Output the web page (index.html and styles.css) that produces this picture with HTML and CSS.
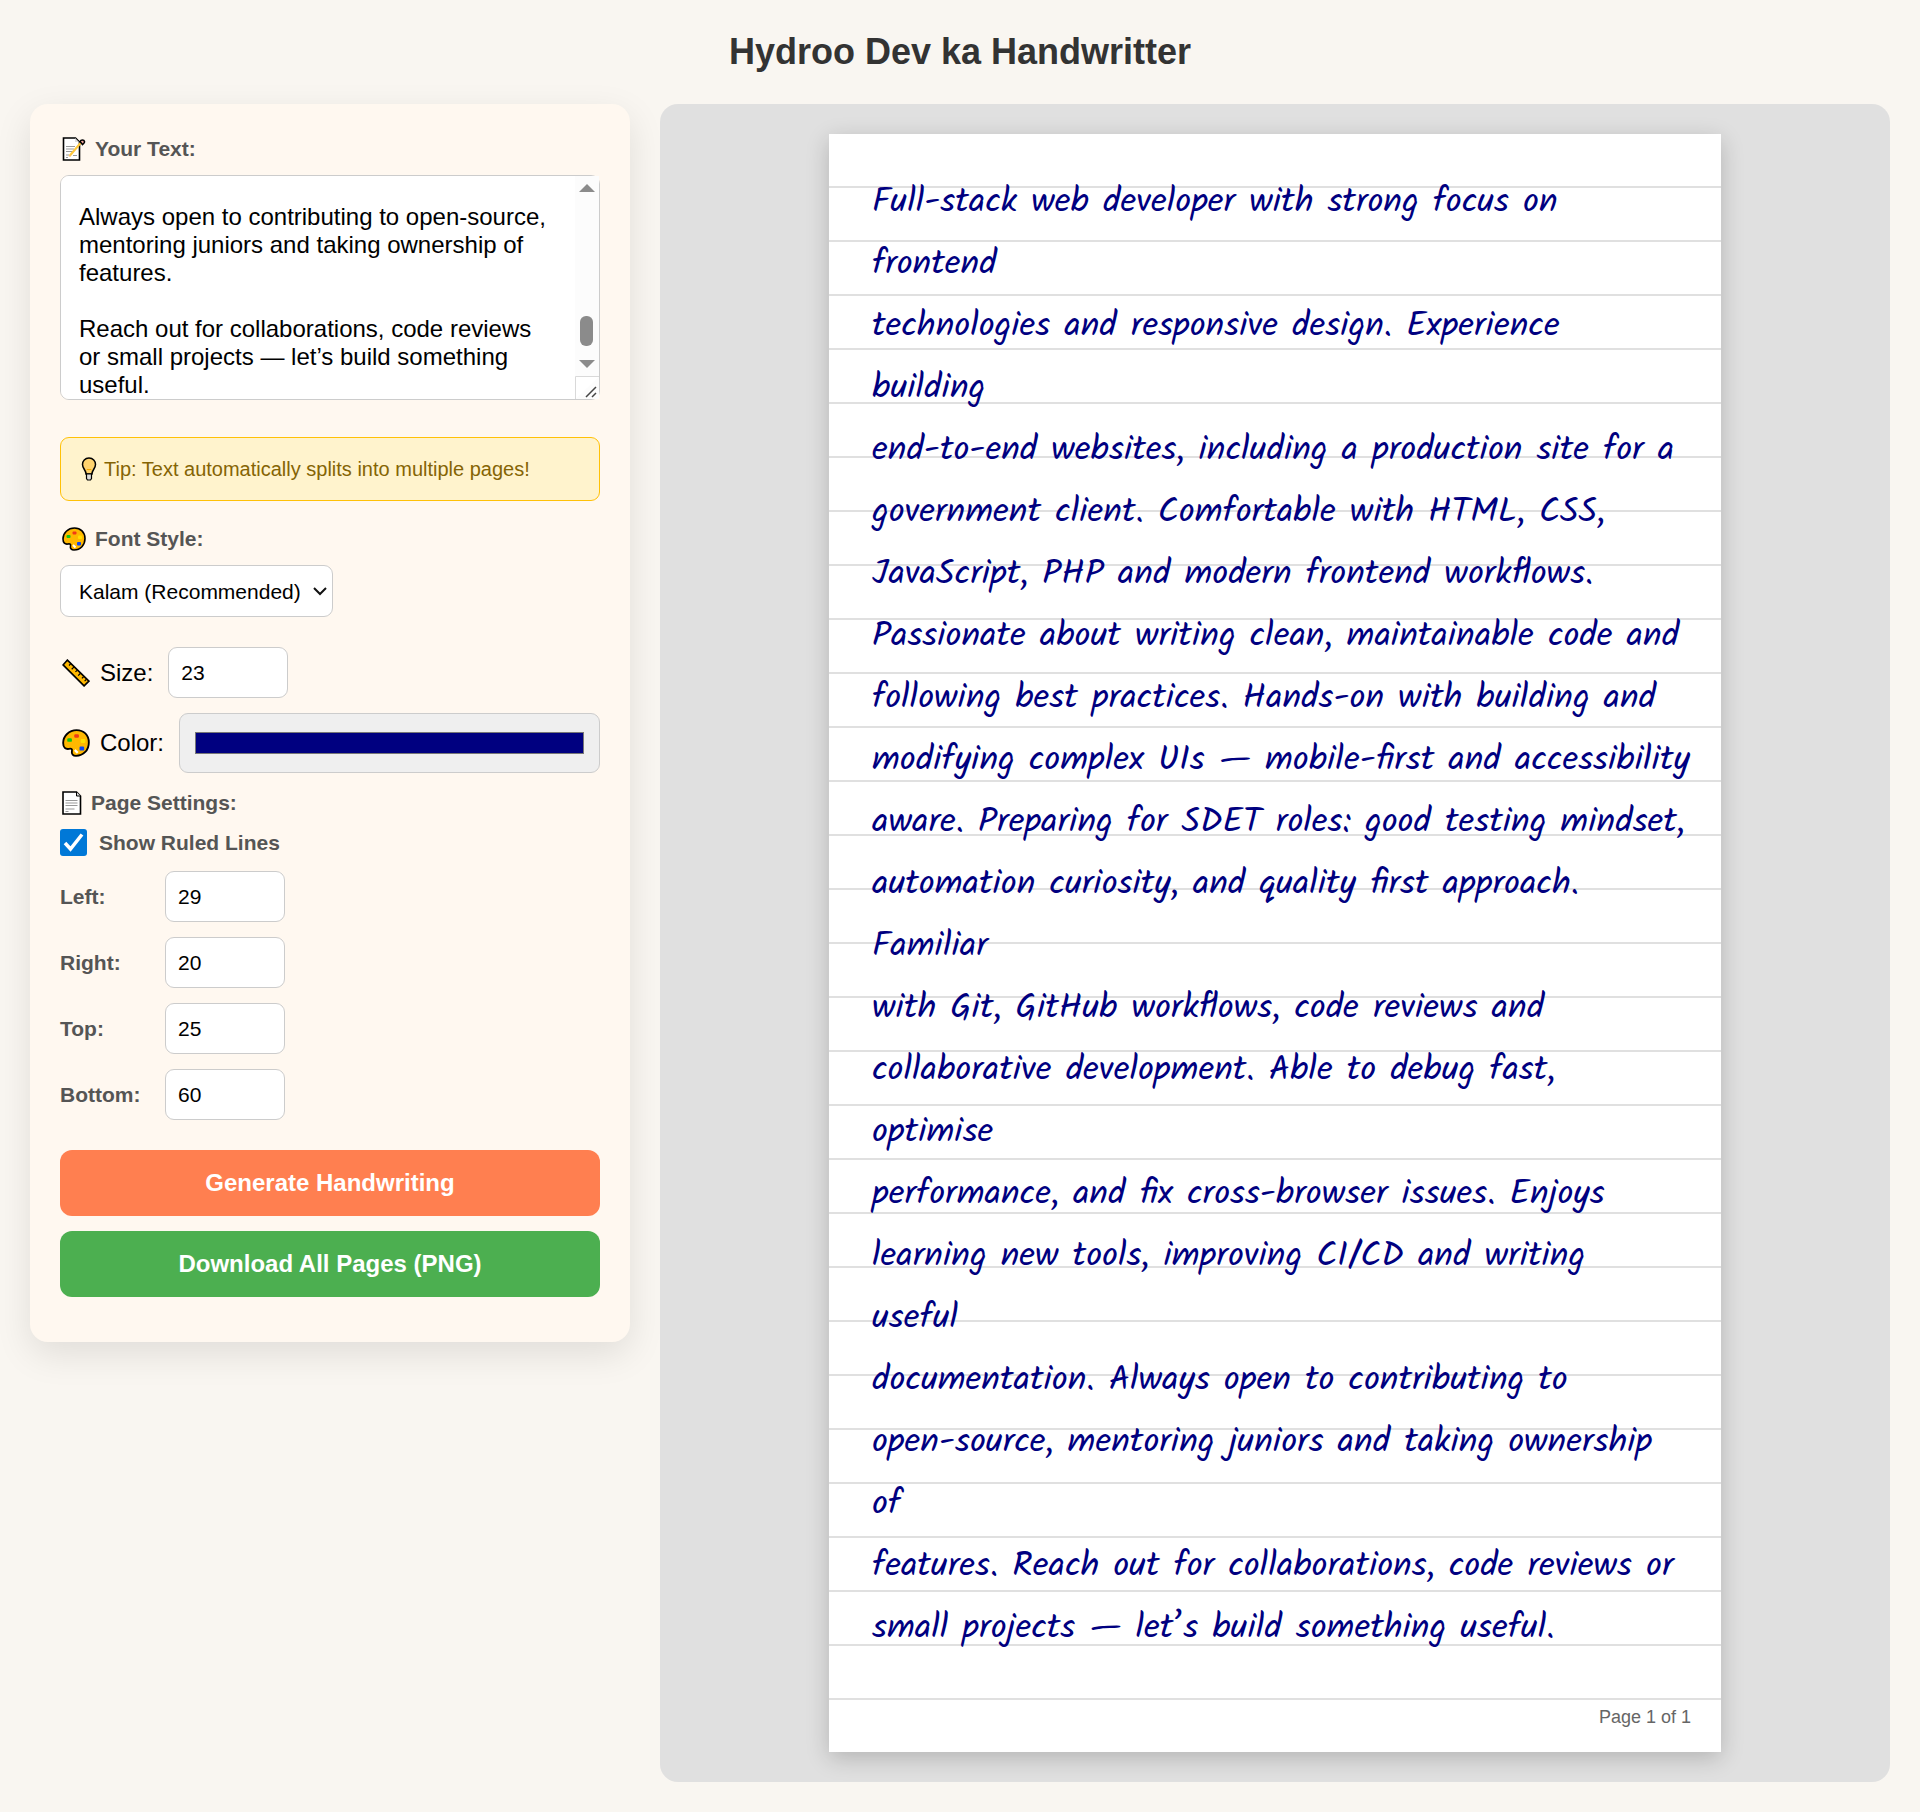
FILE: index.html
```html
<!DOCTYPE html>
<html lang="en">
<head>
<meta charset="utf-8">
<meta name="viewport" content="width=device-width, initial-scale=1">
<title>Hydroo Dev ka Handwritter</title>
<link rel="stylesheet" href="styles.css">
</head>
<body>
<svg class="sprite" aria-hidden="true">
  <symbol id="page" viewBox="2.500 0 24 24">
    <path d="M3.500 1h13.500l4 4v18H3.500z" fill="#fff" stroke="#000" stroke-width="1.600"/>
    <path d="M17 1v4h4" fill="#ddd" stroke="#000" stroke-width="1"/>
    <path d="M6 9.500h12M6 12h12M6 14.500h12M6 18h9M6 20.500h3" stroke="#999" stroke-width="1"/>
  </symbol>
  <symbol id="palette" viewBox="0 0 24 24">
    <path d="M12.500 1C6 1 1 6 1 12c0 4 2 5.500 5 5 2-.4 3 .2 2.500 2-.6 2.400 1 4 3.500 4 6.500 0 11-5 11-11.500S18.500 1 12.500 1z" fill="#ffb800" stroke="#000" stroke-width="1.600"/>
    <rect x="4.500" y="8" width="4" height="3" rx="1" fill="#13c413"/>
    <rect x="10.500" y="4.500" width="4" height="3" rx="1" fill="#f03a17"/>
    <rect x="16" y="8.500" width="4" height="3.500" rx="1" fill="#ffe000"/>
    <rect x="15" y="15" width="4" height="3.500" rx="1" fill="#0d47f2"/>
    <path d="M11 18l2.500 2.500" stroke="#fff" stroke-width="2"/>
  </symbol>
  <symbol id="bulb" viewBox="0 0 16 24">
    <path d="M8 1C4 1 1.500 4 1.500 7.500c0 4 3.500 5.500 3.500 9.500h6c0-4 3.500-5.500 3.500-9.500C14.500 4 12 1 8 1z" fill="#ffd36e" stroke="#000" stroke-width="1.500"/>
    <path d="M5.500 17h5v4.500L9.500 23h-3l-1-1.500z" fill="#ddd" stroke="#000" stroke-width="1.200"/>
    <path d="M5.500 13l1.500-.8 1 .8 1-.8 1.500.8" fill="none" stroke="#f0a500" stroke-width="1"/>
  </symbol>
  <symbol id="ruler" viewBox="0 0 26 26">
    <path d="M5 1l20 19.500-4.500 4.500L1 5.500z" fill="#ffb800" stroke="#000" stroke-width="1.500"/>
    <path d="M8 4.500L6.500 6M11 7.500l-2 2M14 10.500L12.500 12M17 13.500l-2 2M20 16.500L18.500 18M22.500 19l-1.500 1.500" stroke="#000" stroke-width="1.100"/>
  </symbol>
  <symbol id="memo" viewBox="1 0 24 24">
    <path d="M2.500 1h12l4 4v18h-16z" fill="#fff" stroke="#000" stroke-width="1.600"/>
    <path d="M14 1v4h4" fill="#ddd"/>
    <path d="M5 9.500h9M5 12h8M5 14.500h7M5 18h3M12 18.500h4M5 20.500h2" stroke="#999" stroke-width="1"/>
    <path d="M8.500 19L20 5.500" stroke="#ffc83d" stroke-width="2.200"/>
    <path d="M7.500 20l1.500-2 1 1z" fill="#f7b98b"/>
    <path d="M19 4.500c1-2 4-2 4.500 0 .4 1.500-1 2-2 3z" fill="#f4a7a0" stroke="#000" stroke-width="1.600"/>
  </symbol>
</svg>

<h1 class="title">Hydroo Dev ka Handwritter</h1>

<main class="layout">
  <form class="panel">
    <label class="label" for="text"><svg class="icon"><use href="#memo"/></svg>Your Text:</label>
    <div class="text-wrap">
      <textarea class="text-input" id="text">Full-stack web developer with strong focus on frontend
technologies and responsive design. Experience building
end-to-end websites, including a production site for a
government client.

Comfortable with HTML, CSS, JavaScript, PHP and
modern frontend workflows.

Passionate about writing clean, maintainable code and
following best practices.

Hands-on with building and modifying complex UIs
— mobile-first and accessibility aware.

Preparing for SDET roles: good testing mindset,
automation curiosity, and quality first approach.

Familiar with Git, GitHub workflows, code reviews and
collaborative development.

Able to debug fast, optimise performance, and fix
cross-browser issues.

Enjoys learning new tools, improving CI/CD and writing
useful documentation.

Always open to contributing to open-source, mentoring juniors and taking ownership of features.

Reach out for collaborations, code reviews or small projects — let’s build something useful.</textarea>
      <svg class="scrollbar" viewBox="0 0 24 223" aria-hidden="true">
        <path d="M0 0h24v223H0z" fill="#fcfcfc"/>
        <path d="M4 16l8-8 8 8zM4 184h16l-8 8z" fill="#8b8b8b"/>
        <rect x="5" y="140" width="13" height="30" rx="6" fill="#8b8b8b"/>
        <path d="M.5 223v-22.500H24" fill="#fff" stroke="#d9d9d9"/>
        <path d="M11 221l10-10M17 221l4-4" stroke="#444" stroke-width="1.500"/>
      </svg>
    </div>

    <p class="tip"><svg class="icon icon-bulb"><use href="#bulb"/></svg>Tip: Text automatically splits into multiple pages!</p>

    <label class="label" for="font"><svg class="icon"><use href="#palette"/></svg>Font Style:</label>
    <div class="select-wrap">
      <select class="field select" id="font"><option>Kalam (Recommended)</option></select>
    </div>

    <div class="row">
      <label class="row-label" for="size"><svg class="icon icon-lg"><use href="#ruler"/></svg>Size:</label>
      <input class="field number" id="size" type="number" value="23">
    </div>
    <div class="row">
      <label class="row-label" for="color"><svg class="icon icon-lg"><use href="#palette"/></svg>Color:</label>
      <input class="color" id="color" type="color" value="#000080">
    </div>

    <fieldset class="settings">
      <legend class="label settings-title"><svg class="icon icon-page"><use href="#page"/></svg>Page Settings:</legend>
      <label class="check-row"><input class="check" type="checkbox" checked>Show Ruled Lines</label>
      <div class="margins">
        <label for="left">Left:</label><input class="field number" id="left" type="number" value="29">
        <label for="right">Right:</label><input class="field number" id="right" type="number" value="20">
        <label for="top">Top:</label><input class="field number" id="top" type="number" value="25">
        <label for="bottom">Bottom:</label><input class="field number" id="bottom" type="number" value="60">
      </div>
    </fieldset>

    <div class="actions">
      <button class="btn btn-generate" type="button">Generate Handwriting</button>
      <button class="btn btn-download" type="button">Download All Pages (PNG)</button>
    </div>
  </form>

  <section class="preview">
    <article class="paper">
      <div class="writing">
        <p>Full-stack web developer with strong focus on</p>
        <p>frontend</p>
        <p>technologies and responsive design. Experience</p>
        <p>building</p>
        <p>end-to-end websites, including a production site for a</p>
        <p>government client. Comfortable with HTML, CSS,</p>
        <p>JavaScript, PHP and modern frontend workflows.</p>
        <p>Passionate about writing clean, maintainable code and</p>
        <p>following best practices. Hands-on with building and</p>
        <p>modifying complex UIs — mobile-first and accessibility</p>
        <p>aware. Preparing for SDET roles: good testing mindset,</p>
        <p>automation curiosity, and quality first approach.</p>
        <p>Familiar</p>
        <p>with Git, GitHub workflows, code reviews and</p>
        <p>collaborative development. Able to debug fast,</p>
        <p>optimise</p>
        <p>performance, and fix cross-browser issues. Enjoys</p>
        <p>learning new tools, improving CI/CD and writing</p>
        <p>useful</p>
        <p>documentation. Always open to contributing to</p>
        <p>open-source, mentoring juniors and taking ownership</p>
        <p>of</p>
        <p>features. Reach out for collaborations, code reviews or</p>
        <p>small projects — let’s build something useful.</p>
      </div>
      <footer class="page-number">Page 1 of 1</footer>
    </article>
  </section>
</main>
<script src="script.js"></script>
</body>
</html>
```
FILE: styles.css
```css
* {
  box-sizing: border-box;
}

body {
  margin: 0;
  padding: 30px;
  background: #f9f6f1;
  color: #000;
  font-family: Arial, "Liberation Sans", sans-serif;
  font-size: 24px;
}

.sprite {
  display: none;
}

.title {
  margin: 0 0 30px;
  color: #333;
  font-size: 36px;
  line-height: 44px;
  text-align: center;
}

.layout {
  display: grid;
  grid-template-columns: 600px minmax(0, 1fr);
  gap: 30px;
  align-items: start;
}

.panel {
  padding: 30px 30px 45px;
  border-radius: 18px;
  background: #fff8f0;
  box-shadow: 0 12px 36px rgba(0, 0, 0, 0.1);
}

.icon {
  flex: none;
  width: 24px;
  height: 24px;
  margin: 0 9px 0 2px;
}

.icon-page {
  margin-right: 5px;
}

.icon-bulb {
  width: 16px;
  margin: 0 7px 0 2px;
}

.icon-lg {
  width: 28px;
  height: 28px;
  margin-right: 10px;
}

.label {
  display: flex;
  align-items: center;
  margin-bottom: 11px;
  color: #555;
  font-size: 21px;
  font-weight: bold;
  line-height: 30px;
}

.text-wrap {
  position: relative;
}

.text-input {
  display: block;
  width: 100%;
  height: 225px;
  padding: 18px 42px 18px 18px;
  border: 1px solid #ccc;
  border-radius: 9px;
  background: #fff;
  color: #000;
  font: 24px/28px Arial, "Liberation Sans", sans-serif;
  resize: none;
}

.text-input::-webkit-scrollbar {
  display: none;
}

.scrollbar {
  position: absolute;
  top: 1px;
  right: 1px;
  width: 24px;
  height: 223px;
  pointer-events: none;
}

.tip {
  display: flex;
  align-items: center;
  min-height: 64px;
  margin: 37px 0 23px;
  padding: 18px;
  border: 1px solid #ffc107;
  border-radius: 9px;
  background: #fff3cd;
  color: #856404;
  font-size: 20px;
  line-height: 24px;
}

.field {
  border: 1px solid #ccc;
  border-radius: 9px;
  background-color: #fff;
  color: #000;
  font-family: inherit;
  font-size: 21px;
}

.select-wrap {
  margin-bottom: 30px;
}

.select {
  display: block;
  width: 273px;
  height: 52px;
  padding: 0 32px 0 18px;
  appearance: none;
  background-image: url("data:image/svg+xml,%3Csvg xmlns='http://www.w3.org/2000/svg' width='14' height='10'%3E%3Cpath d='M1 2l6 6 6-6' fill='none' stroke='%23111' stroke-width='2'/%3E%3C/svg%3E");
  background-position: right 5px center;
  background-repeat: no-repeat;
}

.number {
  width: 120px;
  height: 51px;
  padding: 0 12px;
}

.row {
  display: flex;
  align-items: center;
  gap: 15px;
  margin-bottom: 15px;
}

.row-label {
  display: flex;
  align-items: center;
}

.color {
  flex: 1;
  min-width: 0;
  height: 60px;
  padding: 0;
  border: 1px solid #ccc;
  border-radius: 9px;
  background: #efefef;
}

.color::-webkit-color-swatch-wrapper {
  padding: 18px 15px;
}

.color::-webkit-color-swatch {
  border: 1px solid #777;
}

.settings {
  min-width: 0;
  margin: 0 0 30px;
  padding: 0;
  border: 0;
}

.settings-title {
  width: 100%;
  padding: 0;
}

.check-row {
  display: flex;
  align-items: center;
  gap: 12px;
  margin-bottom: 15px;
  color: #555;
  font-size: 21px;
  font-weight: bold;
}

.check {
  width: 27px;
  height: 27px;
  margin: 0;
  appearance: none;
  border-radius: 3px;
  background: #fff;
  box-shadow: inset 0 0 0 2px #777;
}

.check:checked {
  background: #0078d7 url("data:image/svg+xml,%3Csvg xmlns='http://www.w3.org/2000/svg' width='27' height='27'%3E%3Cpath d='M5 14l5.500 6L22 5.500' fill='none' stroke='%23fff' stroke-width='3.500'/%3E%3C/svg%3E") no-repeat center;
  box-shadow: none;
}

.margins {
  display: grid;
  grid-template-columns: 105px auto;
  justify-content: start;
  align-items: center;
  row-gap: 15px;
  color: #555;
  font-size: 21px;
  font-weight: bold;
}

.actions {
  display: grid;
  gap: 15px;
}

.btn {
  height: 66px;
  border: 0;
  border-radius: 12px;
  color: #fff;
  font: bold 24px Arial, "Liberation Sans", sans-serif;
  cursor: pointer;
}

.btn-generate {
  background: #ff7f50;
}

.btn-download {
  background: #4caf50;
}

.preview {
  padding: 30px;
  border-radius: 18px;
  background: #e0e0e0;
}

.paper {
  width: 100%;
  max-width: 892px;
  margin: 0 auto;
  padding: 38px 28px 23px 43px;
  background: #fff repeating-linear-gradient(#fff 0 52px, #e0e0e0 52px 54px);
  box-shadow: 0 6px 22px rgba(0, 0, 0, 0.2);
}

.writing {
  color: #000080;
  font-family: Kalam, "Lato", cursive;
  font-size: 35px;
  line-height: 62px;
}

.writing p {
  margin: 0;
}

.page-number {
  margin: 46px 2px 0 0;
  color: #666;
  font-size: 18px;
  line-height: 23px;
  text-align: right;
}
```
FILE: script.js
```js
// Keep the end of the text in view, with the last line on the lower edge.
const text = document.getElementById("text");
text.scrollTop = text.scrollHeight - text.clientHeight - 18;
```
